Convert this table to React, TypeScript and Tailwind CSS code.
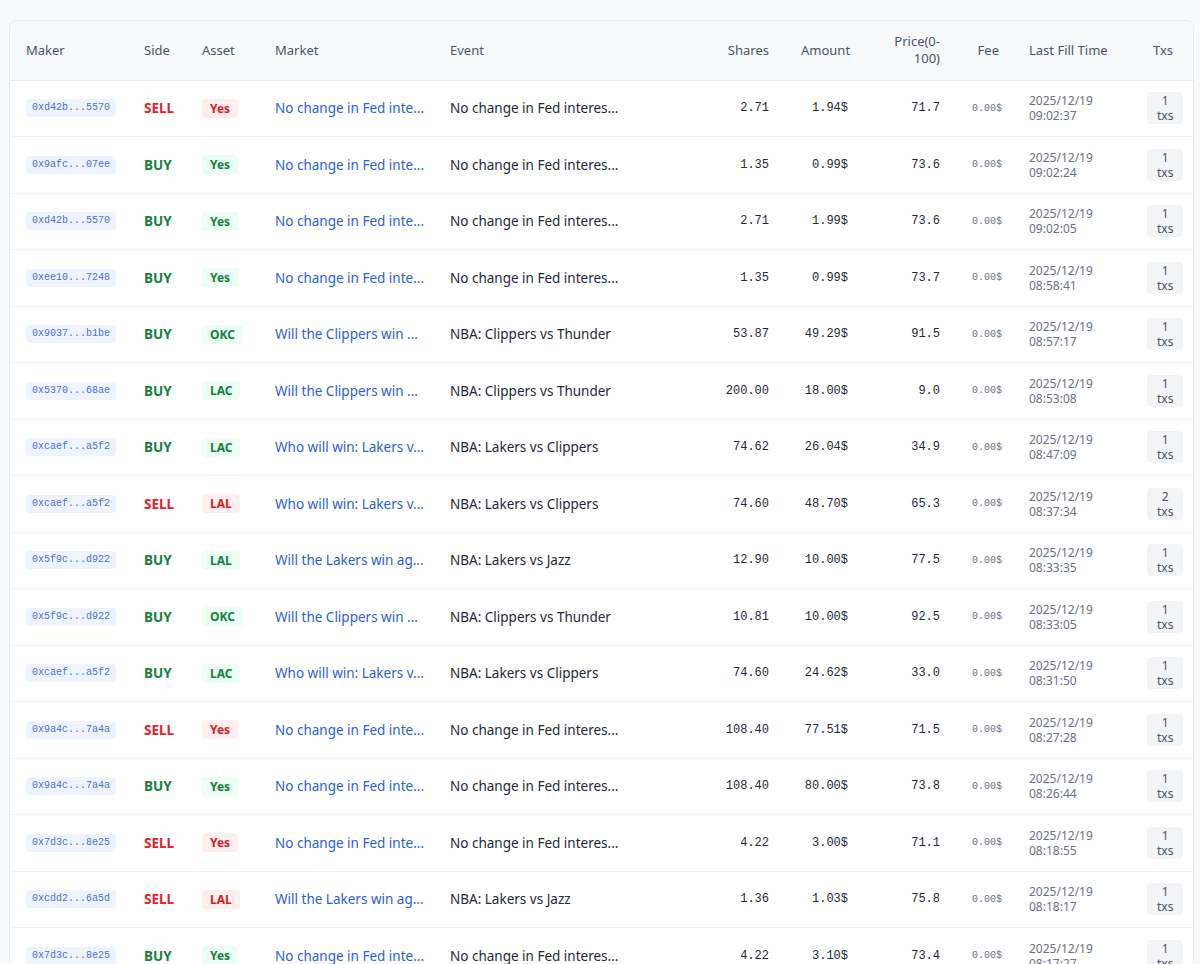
import React from "react";

type Trade = {
  maker: string;
  side: "BUY" | "SELL";
  asset: string;
  market: string;
  event: string;
  shares: string;
  amount: string;
  price: string;
  time: string;
  txs: number;
};

const FED_M = "No change in Fed inte...";
const FED_E = "No change in Fed interes...";
const CLIP_M = "Will the Clippers win ...";
const CLIP_E = "NBA: Clippers vs Thunder";
const LAKC_M = "Who will win: Lakers v...";
const LAKC_E = "NBA: Lakers vs Clippers";
const JAZZ_M = "Will the Lakers win ag...";
const JAZZ_E = "NBA: Lakers vs Jazz";

const trades: Trade[] = [
  { maker: "0xd42b...5570", side: "SELL", asset: "Yes", market: FED_M, event: FED_E, shares: "2.71", amount: "1.94$", price: "71.7", time: "09:02:37", txs: 1 },
  { maker: "0x9afc...07ee", side: "BUY", asset: "Yes", market: FED_M, event: FED_E, shares: "1.35", amount: "0.99$", price: "73.6", time: "09:02:24", txs: 1 },
  { maker: "0xd42b...5570", side: "BUY", asset: "Yes", market: FED_M, event: FED_E, shares: "2.71", amount: "1.99$", price: "73.6", time: "09:02:05", txs: 1 },
  { maker: "0xee10...7248", side: "BUY", asset: "Yes", market: FED_M, event: FED_E, shares: "1.35", amount: "0.99$", price: "73.7", time: "08:58:41", txs: 1 },
  { maker: "0x9037...b1be", side: "BUY", asset: "OKC", market: CLIP_M, event: CLIP_E, shares: "53.87", amount: "49.29$", price: "91.5", time: "08:57:17", txs: 1 },
  { maker: "0x5370...68ae", side: "BUY", asset: "LAC", market: CLIP_M, event: CLIP_E, shares: "200.00", amount: "18.00$", price: "9.0", time: "08:53:08", txs: 1 },
  { maker: "0xcaef...a5f2", side: "BUY", asset: "LAC", market: LAKC_M, event: LAKC_E, shares: "74.62", amount: "26.04$", price: "34.9", time: "08:47:09", txs: 1 },
  { maker: "0xcaef...a5f2", side: "SELL", asset: "LAL", market: LAKC_M, event: LAKC_E, shares: "74.60", amount: "48.70$", price: "65.3", time: "08:37:34", txs: 2 },
  { maker: "0x5f9c...d922", side: "BUY", asset: "LAL", market: JAZZ_M, event: JAZZ_E, shares: "12.90", amount: "10.00$", price: "77.5", time: "08:33:35", txs: 1 },
  { maker: "0x5f9c...d922", side: "BUY", asset: "OKC", market: CLIP_M, event: CLIP_E, shares: "10.81", amount: "10.00$", price: "92.5", time: "08:33:05", txs: 1 },
  { maker: "0xcaef...a5f2", side: "BUY", asset: "LAC", market: LAKC_M, event: LAKC_E, shares: "74.60", amount: "24.62$", price: "33.0", time: "08:31:50", txs: 1 },
  { maker: "0x9a4c...7a4a", side: "SELL", asset: "Yes", market: FED_M, event: FED_E, shares: "108.40", amount: "77.51$", price: "71.5", time: "08:27:28", txs: 1 },
  { maker: "0x9a4c...7a4a", side: "BUY", asset: "Yes", market: FED_M, event: FED_E, shares: "108.40", amount: "80.00$", price: "73.8", time: "08:26:44", txs: 1 },
  { maker: "0x7d3c...8e25", side: "SELL", asset: "Yes", market: FED_M, event: FED_E, shares: "4.22", amount: "3.00$", price: "71.1", time: "08:18:55", txs: 1 },
  { maker: "0xcdd2...6a5d", side: "SELL", asset: "LAL", market: JAZZ_M, event: JAZZ_E, shares: "1.36", amount: "1.03$", price: "75.8", time: "08:18:17", txs: 1 },
  { maker: "0x7d3c...8e25", side: "BUY", asset: "Yes", market: FED_M, event: FED_E, shares: "4.22", amount: "3.10$", price: "73.4", time: "08:17:27", txs: 1 },
];

const mono = "font-['Liberation_Mono','DejaVu_Sans_Mono',monospace]";

export default function App() {
  return (
    <div className="min-h-screen bg-[#f8fafc] pt-5 pl-[9px] font-['Noto_Sans',sans-serif]">
      <div className="w-[1185px] rounded-lg border border-[#e8ebef] bg-white overflow-hidden">
        <table className="w-full table-fixed border-collapse">
          <colgroup>
            <col className="w-[118px]" />
            <col className="w-[58px]" />
            <col className="w-[73px]" />
            <col className="w-[175px]" />
            <col className="w-[267px]" />
            <col className="w-[84px]" />
            <col className="w-[79px]" />
            <col className="w-[92px]" />
            <col className="w-[59px]" />
            <col className="w-[116px]" />
            <col className="w-[64px]" />
          </colgroup>
          <thead>
            <tr className="h-[59px] bg-[#f8f9fb] text-[13px] text-gray-600 border-b border-[#e8ebef]">
              <th className="px-4 font-normal text-left">Maker</th>
              <th className="px-4 font-normal text-left">Side</th>
              <th className="px-4 font-normal text-left">Asset</th>
              <th className="px-4 font-normal text-left">Market</th>
              <th className="px-4 font-normal text-left">Event</th>
              <th className="px-4 font-normal text-right">Shares</th>
              <th className="px-4 font-normal text-right">Amount</th>
              <th className="px-4 font-normal text-right leading-[17px]">Price(0-100)</th>
              <th className="px-4 font-normal text-right">Fee</th>
              <th className="px-3.5 font-normal text-left whitespace-nowrap">Last Fill Time</th>
              <th className="px-4 font-normal text-center">Txs</th>
            </tr>
          </thead>
          <tbody>
            {trades.map((t, i) => {
              const sell = t.side === "SELL";
              return (
                <tr key={i} className="h-[56.5px] border-b border-[#f1f3f5] text-[13.5px]">
                  <td className="px-4 py-0">
                    <span className={`${mono} block w-fit rounded bg-[#edf4ff] px-1.5 py-[3px] text-[10px] leading-[12px] text-[#4f6fd8]`}>
                      {t.maker}
                    </span>
                  </td>
                  <td className={`px-4 py-0 font-bold ${sell ? "text-[#e0212e]" : "text-[#15803d]"}`}>{t.side}</td>
                  <td className="px-4 py-0">
                    <span
                      className={`block w-fit rounded px-2 py-[2px] text-xs leading-[15px] font-bold ${
                        sell ? "bg-[#feeeee] text-[#d91c24]" : "bg-[#ecfdf3] text-[#15803d]"
                      }`}
                    >
                      {t.asset}
                    </span>
                  </td>
                  <td className="px-4 py-0 whitespace-nowrap text-[#2b5fd9]">{t.market}</td>
                  <td className="px-4 py-0 whitespace-nowrap text-gray-800">{t.event}</td>
                  <td className={`${mono} px-4 py-0 text-right text-[12px] text-gray-800`}>{t.shares}</td>
                  <td className={`${mono} px-4 py-0 text-right text-[12px] text-gray-800`}>{t.amount}</td>
                  <td className={`${mono} px-4 py-0 text-right text-[12px] text-gray-800`}>{t.price}</td>
                  <td className={`${mono} px-4 py-0 text-right text-[10px] text-gray-500`}>0.00$</td>
                  <td className="px-3.5 py-0 text-xs leading-[15px] text-gray-500">
                    <div>2025/12/19</div>
                    <div>{t.time}</div>
                  </td>
                  <td className="px-4 py-0">
                    <div className="mx-auto flex w-fit flex-col items-center rounded bg-gray-100 px-2.5 py-[1px] text-xs leading-[15px] text-gray-600">
                      <span>{t.txs}</span>
                      <span>txs</span>
                    </div>
                  </td>
                </tr>
              );
            })}
          </tbody>
        </table>
      </div>
    </div>
  );
}
